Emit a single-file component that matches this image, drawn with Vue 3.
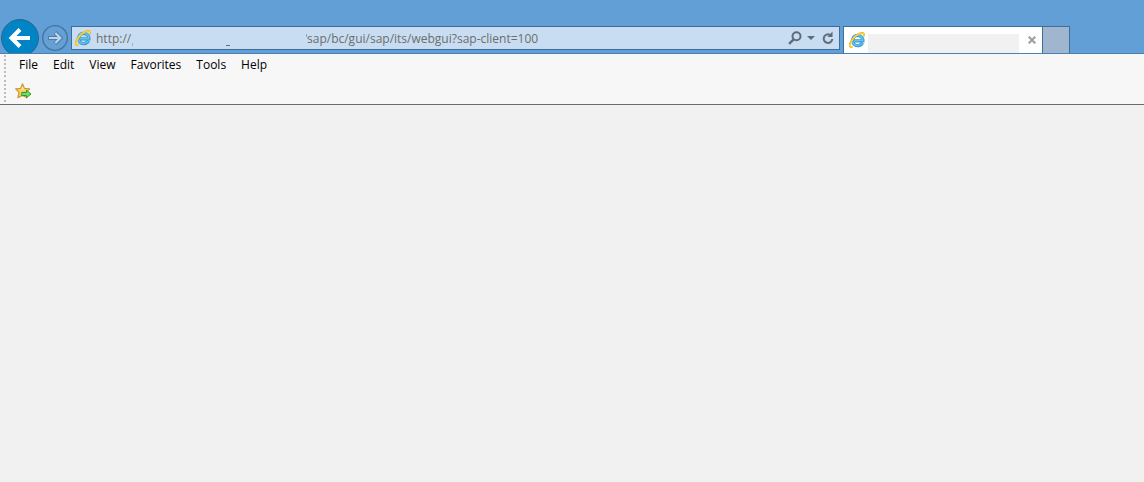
<script setup>
import { ref } from 'vue'

const path = ref('sap/bc/gui/sap/its/webgui?sap-client=100')
const menus = ['File', 'Edit', 'View', 'Favorites', 'Tools', 'Help']
</script>

<template>
  <div class="browser">
    <svg class="defs" aria-hidden="true">
      <symbol id="ie-logo" viewBox="0 0 16 16">
        <path d="M13.400 10.800A5.200 5.200 0 1 1 13.900 8.900H5" fill="none" stroke="#2f94d0" stroke-width="3.200" />
        <path d="M13.200 10.800A5.200 5.200 0 1 1 13.800 8.700H5" fill="none" stroke="#62c3ef" stroke-width="1.700" />
        <path d="M3.500 14.700C.4 15.900-.2 13.200 2 9.500 4.400 5.500 9 1.500 12.500 1c2.600-.3 2.900 1.300 2 3.300" fill="none" stroke="#e0aa20" stroke-width="1.800" />
        <path d="M3.400 14.600C.6 15.600 0 13 2.200 9.500 4.600 5.500 9 1.600 12.500 1.100c2.300-.2 2.600 1.100 1.900 3" fill="none" stroke="#ffd338" stroke-width="1.400" />
      </symbol>
    </svg>
    <header class="top">
      <button class="back" aria-label="Back">
        <svg width="38" height="38" viewBox="0 0 38 38">
          <circle cx="19" cy="19" r="18.500" fill="#0084c6" stroke="#28658f" />
          <path d="M29 19H11M19 10.500 10.500 19l8.500 8.500" fill="none" stroke="#fff" stroke-width="4" />
        </svg>
      </button>
      <button class="forward" aria-label="Forward">
        <svg width="26" height="26" viewBox="0 0 26 26">
          <circle cx="13" cy="13" r="12.300" fill="#659fd3" stroke="#41749f" stroke-width="1.300" />
          <path d="M6 13h12M13 7.500l5.500 5.500-5.500 5.500" fill="none" stroke="#4b7fab" stroke-width="4" />
          <path d="M7 13h11M13.300 8l5 5-5 5" fill="none" stroke="#b9d4ec" stroke-width="2.200" />
        </svg>
      </button>
      <form class="address" @submit.prevent>
        <svg class="logo" width="16" height="16"><use href="#ie-logo" /></svg>
        <span class="scheme">http://</span>
        <span class="host"><i class="tick"></i><i class="dash"></i><i class="slash"></i></span>
        <input v-model="path" class="url" aria-label="Address" spellcheck="false" />
        <button class="tool" type="button" aria-label="Search">
          <svg width="14" height="14" viewBox="0 0 14 14" fill="none" stroke="#5f6b78" stroke-width="2">
            <circle cx="8.500" cy="5.300" r="4" />
            <path d="M5.700 8.300 1 12.800" stroke-width="2.400" />
          </svg>
        </button>
        <button class="tool caret" type="button" aria-label="Show address history">
          <svg width="8" height="4" viewBox="0 0 8 4"><path d="M0 0h8L4 4z" fill="#5f6b78" /></svg>
        </button>
        <button class="tool" type="button" aria-label="Refresh">
          <svg width="12" height="14" viewBox="0 0 12 14">
            <path d="M8 3.800A4.300 4.300 0 1 0 10.300 8" fill="none" stroke="#5f6b78" stroke-width="2" />
            <path d="M10.500 .5v5.500H5.500z" fill="#5f6b78" />
          </svg>
        </button>
      </form>
      <div class="tab">
        <svg class="logo" width="16" height="16"><use href="#ie-logo" /></svg>
        <span class="title"></span>
        <button class="close" aria-label="Close tab">
          <svg width="8" height="8" viewBox="0 0 8 8"><path d="M.7.7l6.600 6.600M7.300.7.7 7.300" stroke="#a0a0a0" stroke-width="2.200" /></svg>
        </button>
      </div>
      <button class="new-tab" aria-label="New tab"></button>
    </header>
    <div class="bars">
      <div class="grips" aria-hidden="true"><span class="grip"></span><span class="grip"></span></div>
      <div class="rows">
        <nav class="menu">
          <button v-for="m in menus" :key="m">{{ m }}</button>
        </nav>
        <div class="favorites">
          <button aria-label="Add to Favorites bar">
            <svg width="17" height="16" viewBox="0 0 17 16">
              <path d="M7.500.8 9.500 5.400l5.200.5-3.800 3.500 1 5.200-4.400-2.200-4.600 2.200 1.100-5.200L.6 5.900l5-.5z" fill="#fbd05a" stroke="#cf9a35" stroke-width="1.200" stroke-linejoin="round" />
              <path d="M7.500 3 8.900 6.400l3 .4H3.500l2.800-.4z" fill="#fff0b4" />
              <path d="M6.800 9.500h4.700V7.300l4.500 3.700-4.500 3.700v-2.200H6.800z" fill="#72df62" stroke="#2f9a35" />
            </svg>
          </button>
        </div>
      </div>
    </div>
    <main class="page"></main>
  </div>
</template>

<style>
body {
  margin: 0;
  background: #f1f1f1;
}
</style>

<style scoped>
.browser {
  min-height: 100vh;
  display: flex;
  flex-direction: column;
  background: #f1f1f1;
  font-family: "Open Sans", "Noto Sans", sans-serif;
  font-size: 12px;
}
.defs {
  position: absolute;
  width: 0;
  height: 0;
}
button {
  border: 0;
  padding: 0;
  background: none;
  font: inherit;
  color: inherit;
}
svg {
  display: block;
  flex: none;
}
.top {
  display: flex;
  align-items: flex-start;
  box-sizing: border-box;
  height: 54px;
  padding: 26px 74px 0 1px;
  overflow: hidden;
  background: #629fd6;
  border-bottom: 1px solid #4b81ae;
}
.back {
  flex: none;
  margin-top: -7px;
}
.forward {
  flex: none;
  margin: -1px 3px 0;
}
.address {
  flex: 1;
  min-width: 0;
  display: flex;
  align-items: center;
  box-sizing: border-box;
  height: 24px;
  padding: 0 5px 0 3px;
  border: 1px solid #3e6e98;
  background: #c8ddf1;
  color: #6d6d6d;
}
.scheme {
  flex: none;
  width: 36px;
  margin-left: 5px;
}
.host {
  display: flex;
  justify-content: space-between;
  align-items: flex-end;
  flex: none;
  width: 175px;
  height: 16px;
}
.tick {
  width: 1px;
  height: 3px;
  background: #a3b1be;
}
.dash {
  width: 4px;
  height: 1px;
  margin-left: 16px;
  background: #6d6d6d;
}
.slash {
  align-self: flex-start;
  width: 1px;
  height: 3px;
  margin-top: 4px;
  background: #98a5b1;
}
.url {
  flex: 1;
  min-width: 0;
  padding: 0;
  border: 0;
  outline: 0;
  background: none;
  font: inherit;
  color: inherit;
}
.caret {
  margin: 0 7px 0 5px;
}
.tab {
  flex: none;
  display: flex;
  align-items: center;
  box-sizing: border-box;
  width: 200px;
  height: 27px;
  margin-left: 3px;
  padding: 0 6px 0 5px;
  border: solid #3e6e98;
  border-width: 1px 1px 0;
  background: #fff;
}
.title {
  flex: 1;
  height: 19px;
  margin: 7px 9px 0 3px;
  background: #f1f1f1;
}
.new-tab {
  flex: none;
  box-sizing: border-box;
  width: 27px;
  height: 27px;
  border: solid #3e6e98;
  border-width: 1px 1px 0 0;
  background: #a0b6ce;
}
.bars {
  display: flex;
  height: 50px;
  background: #f7f7f7;
  border-bottom: 1px solid #6c6c6c;
}
.grips {
  display: flex;
  flex-direction: column;
  gap: 3px;
  padding: 1px 0 0 4px;
}
.grip {
  width: 2px;
  height: 22px;
  background: repeating-linear-gradient(#bcbcbc 0 2px, transparent 2px 4px);
}
.rows {
  flex: 1;
  padding-left: 9px;
}
.menu {
  display: flex;
  gap: 15px;
  height: 20px;
  padding-left: 4px;
  color: #000;
}
.favorites {
  display: flex;
  padding-top: 9px;
}
.page {
  flex: 1;
}
</style>
